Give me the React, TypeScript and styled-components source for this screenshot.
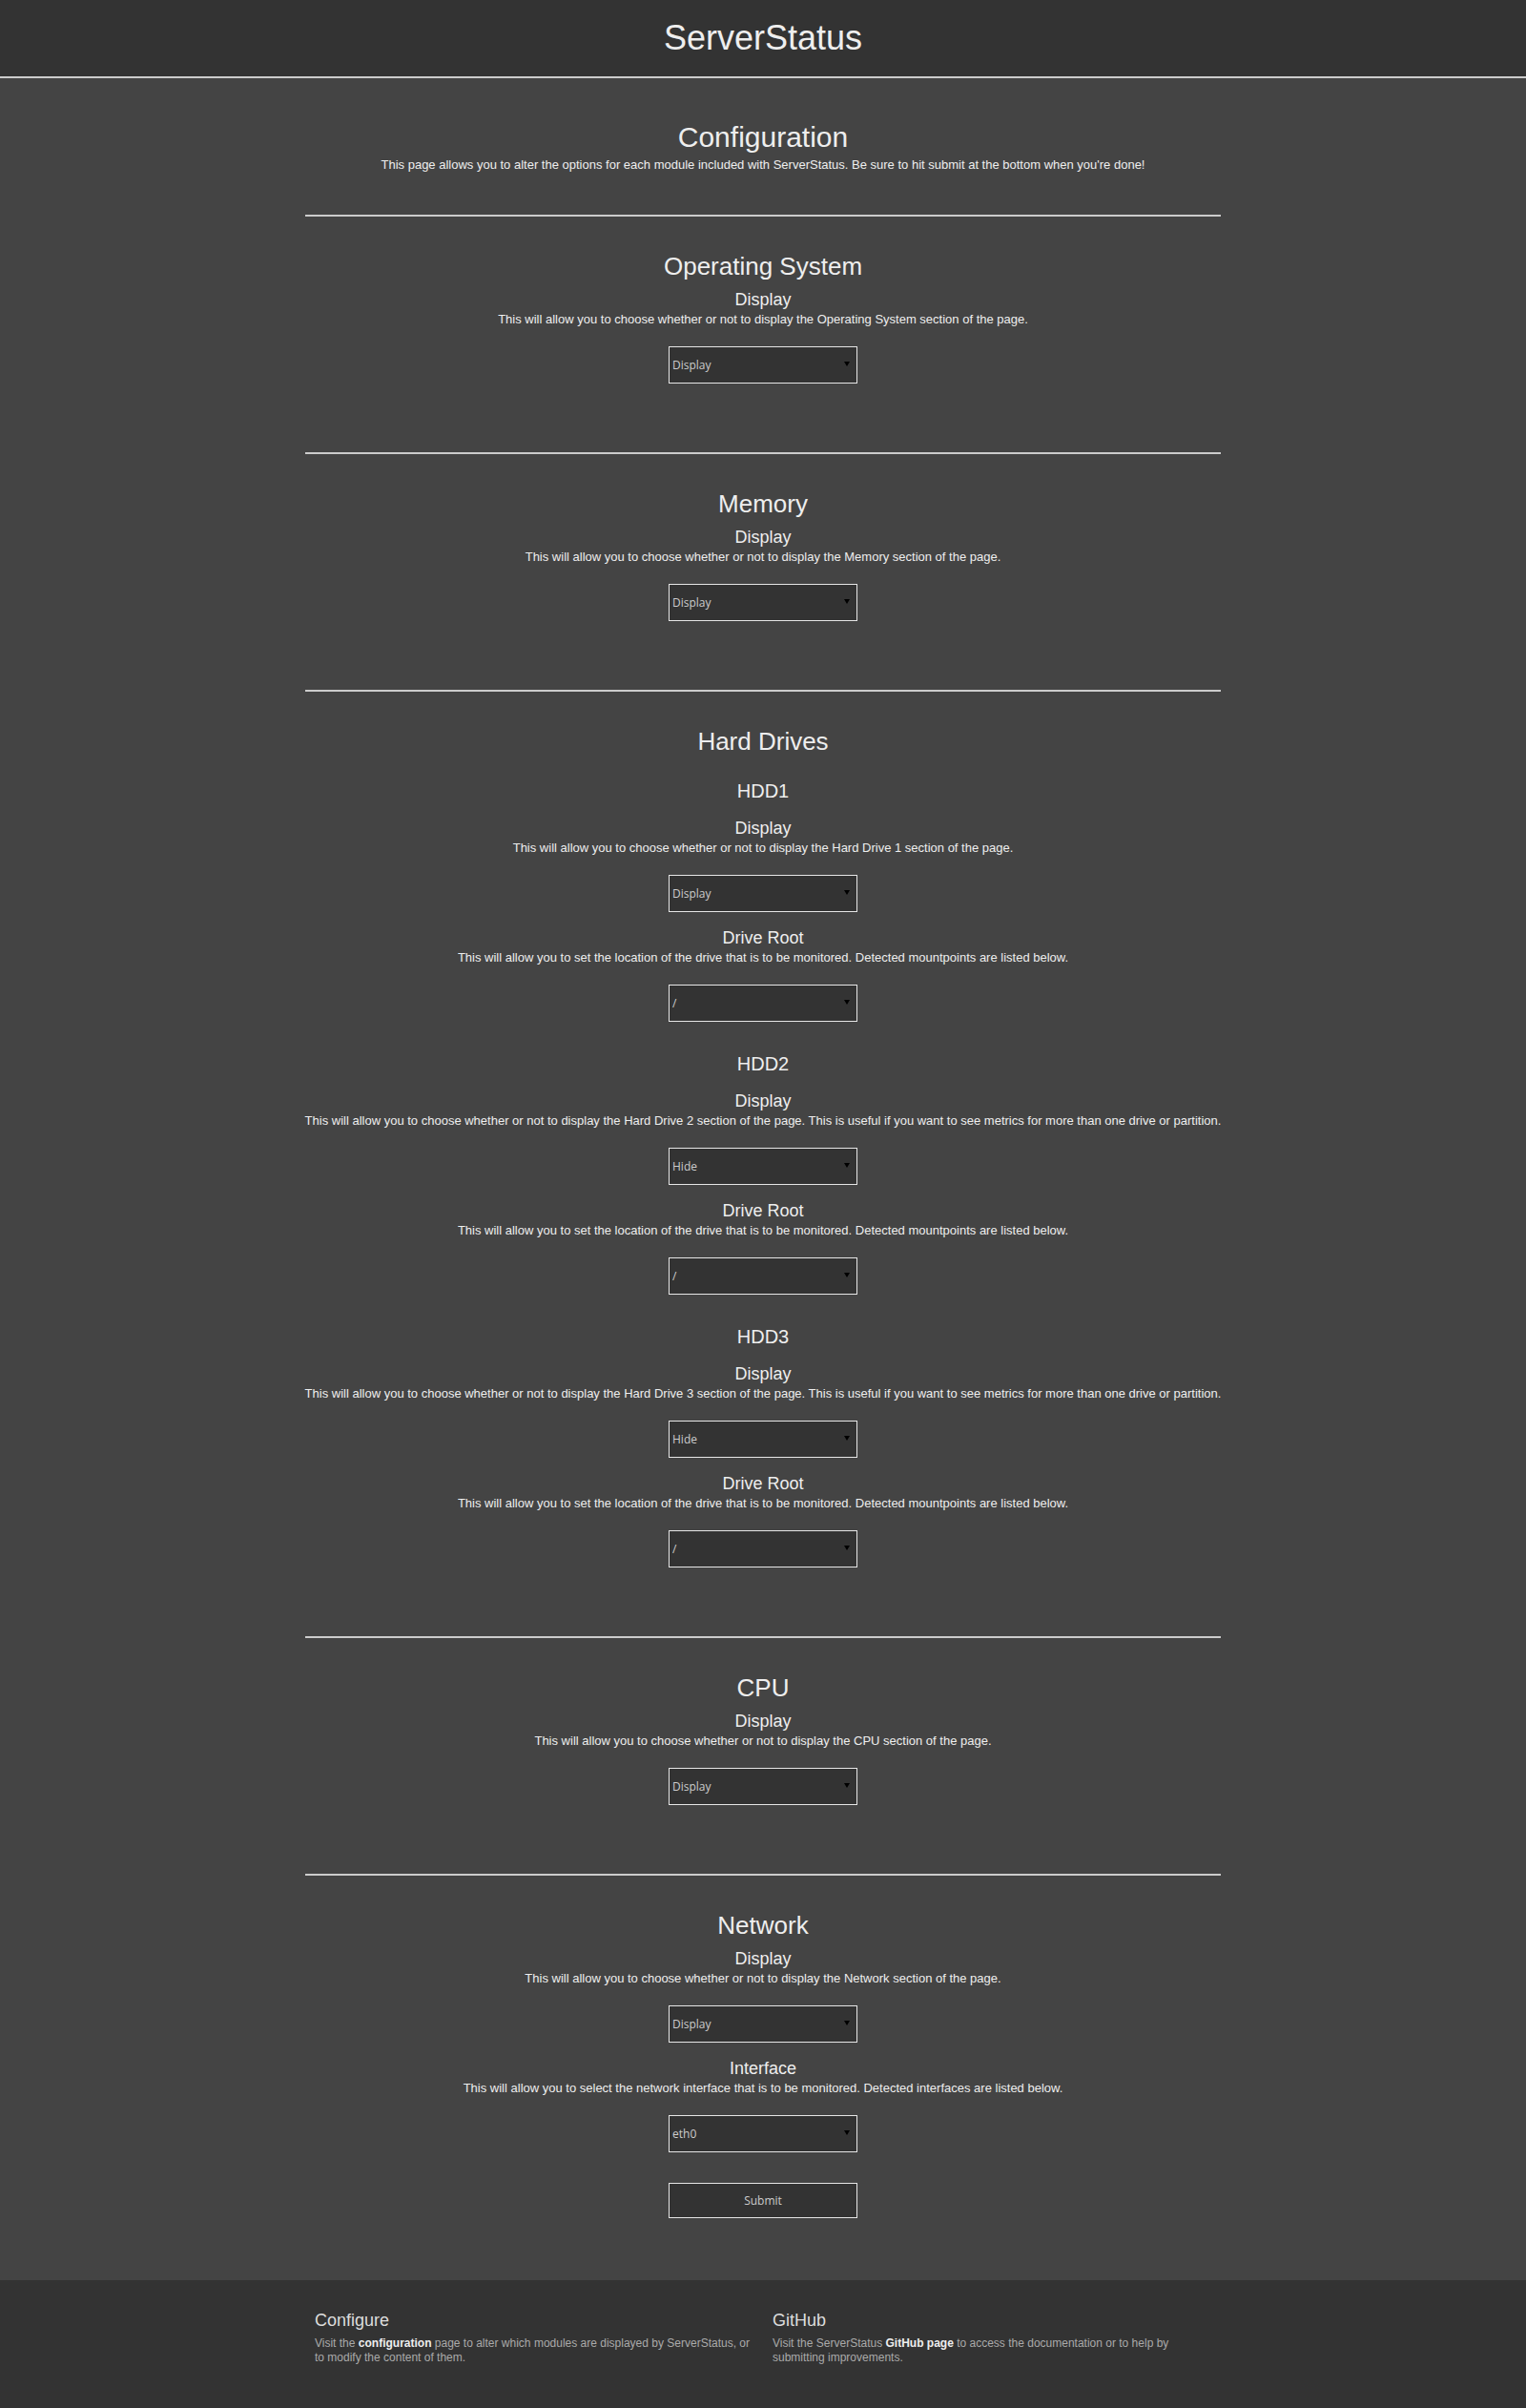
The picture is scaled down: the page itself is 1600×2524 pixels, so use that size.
import styled, { createGlobalStyle } from "styled-components";

interface FieldInfo {
  label: string;
  hint: string;
  options: string[];
  value: string;
}

interface DriveInfo {
  name: string;
  fields: FieldInfo[];
}

const displayField = (name: string, value = "Display", extra = ""): FieldInfo => ({
  label: "Display",
  hint: `This will allow you to choose whether or not to display the ${name} section of the page.${extra}`,
  options: ["Display", "Hide"],
  value,
});

const rootField: FieldInfo = {
  label: "Drive Root",
  hint: "This will allow you to set the location of the drive that is to be monitored. Detected mountpoints are listed below.",
  options: ["/"],
  value: "/",
};

const useful = " This is useful if you want to see metrics for more than one drive or partition.";

const drives: DriveInfo[] = [
  { name: "HDD1", fields: [displayField("Hard Drive 1"), rootField] },
  { name: "HDD2", fields: [displayField("Hard Drive 2", "Hide", useful), rootField] },
  { name: "HDD3", fields: [displayField("Hard Drive 3", "Hide", useful), rootField] },
];

const GlobalStyle = createGlobalStyle`
  html, body {
    margin: 0;
    padding: 0;
    background: #444444;
  }
  body {
    font-family: "Liberation Sans", Arial, Helvetica, sans-serif;
    color: #eeeeee;
  }
`;

function Field({ field }: { field: FieldInfo }) {
  return (
    <StyledField>
      <Label>{field.label}</Label>
      <Hint>{field.hint}</Hint>
      <SelectWrap>
        <Select defaultValue={field.value}>
          {field.options.map(o => (
            <option key={o}>{o}</option>
          ))}
        </Select>
      </SelectWrap>
    </StyledField>
  );
}

function App() {
  return (
    <>
      <GlobalStyle />
      <Header>ServerStatus</Header>
      <Main>
        <Intro>
          <PageTitle>Configuration</PageTitle>
          <Hint>
            This page allows you to alter the options for each module included with ServerStatus. Be sure to hit
            submit at the bottom when you're done!
          </Hint>
        </Intro>
        <Rule />
        <Section>
          <SectionTitle>Operating System</SectionTitle>
          <Field field={displayField("Operating System")} />
        </Section>
        <Rule />
        <Section>
          <SectionTitle>Memory</SectionTitle>
          <Field field={displayField("Memory")} />
        </Section>
        <Rule />
        <Section>
          <SectionTitle>Hard Drives</SectionTitle>
          <DriveList>
            {drives.map(d => (
              <Drive key={d.name}>
                <DriveTitle>{d.name}</DriveTitle>
                {d.fields.map(f => (
                  <Field key={f.label} field={f} />
                ))}
              </Drive>
            ))}
          </DriveList>
        </Section>
        <Rule />
        <Section>
          <SectionTitle>CPU</SectionTitle>
          <Field field={displayField("CPU")} />
        </Section>
        <Rule />
        <Section $last>
          <SectionTitle>Network</SectionTitle>
          <Field field={displayField("Network")} />
          <Field
            field={{
              label: "Interface",
              hint: "This will allow you to select the network interface that is to be monitored. Detected interfaces are listed below.",
              options: ["eth0"],
              value: "eth0",
            }}
          />
          <SubmitButton type="button">Submit</SubmitButton>
        </Section>
      </Main>
      <Footer>
        <FooterInner>
          <FooterCol>
            <FooterTitle>Configure</FooterTitle>
            <FooterText>
              Visit the <FooterLink>configuration</FooterLink> page to alter which modules are displayed by
              ServerStatus, or to modify the content of them.
            </FooterText>
          </FooterCol>
          <FooterCol>
            <FooterTitle>GitHub</FooterTitle>
            <FooterText>
              Visit the ServerStatus <FooterLink>GitHub page</FooterLink> to access the documentation or to help by
              submitting improvements.
            </FooterText>
          </FooterCol>
        </FooterInner>
      </Footer>
    </>
  );
}
export default App;

const Header = styled.header`
  height: 80px;
  line-height: 80px;
  background: #333333;
  border-bottom: 2px solid #cccccc;
  text-align: center;
  font-size: 36px;
  color: #eeeeee;
`;

const Main = styled.main`
  width: 960px;
  margin: 0 auto;
  padding-top: 44px;
  text-align: center;
`;

const Intro = styled.div`
  padding-bottom: 44px;
`;

const PageTitle = styled.h1`
  margin: 0 0 3px;
  font-size: 30px;
  line-height: 36px;
  font-weight: normal;
`;

const Rule = styled.div`
  height: 2px;
  background: #cccccc;
`;

const Section = styled.section<{ $last?: boolean }>`
  padding-top: 37px;
  padding-bottom: ${p => (p.$last ? "65px" : "72px")};
`;

const SectionTitle = styled.h2`
  margin: 0 0 8px;
  font-size: 26px;
  line-height: 31px;
  font-weight: normal;
`;

const DriveList = styled.div`
  padding-top: 16px;
  display: flex;
  flex-direction: column;
  gap: 32px;
`;

const Drive = styled.div``;

const DriveTitle = styled.h3`
  margin: 0 0 16px;
  font-size: 20px;
  line-height: 24px;
  font-weight: normal;
`;

const StyledField = styled.div`
  & + & {
    margin-top: 16px;
  }
`;

const Label = styled.h4`
  margin: 0;
  font-size: 18px;
  line-height: 22px;
  font-weight: normal;
`;

const Hint = styled.p`
  margin: 2px -30px 0;
  font-size: 13px;
  line-height: 16px;
  white-space: nowrap;
  color: #eeeeee;
`;

const SelectWrap = styled.span`
  position: relative;
  display: inline-block;
  margin-top: 20px;
  vertical-align: top;

  &::after {
    content: "";
    position: absolute;
    right: 8px;
    top: 16px;
    border-left: 3px solid transparent;
    border-right: 3px solid transparent;
    border-top: 5px solid #000000;
    pointer-events: none;
  }
`;

const Select = styled.select`
  appearance: none;
  -webkit-appearance: none;
  display: block;
  box-sizing: border-box;
  width: 198px;
  height: 39px;
  margin: 0;
  padding: 0 3px;
  border: 1px solid #e6e6e6;
  border-radius: 0;
  background: #333333;
  color: #cccccc;
  font-family: "Open Sans", "Noto Sans", sans-serif;
  font-size: 12px;
  outline: none;
`;

const SubmitButton = styled.button`
  display: block;
  box-sizing: border-box;
  width: 198px;
  height: 37px;
  margin: 32px auto 0;
  border: 1px solid #e6e6e6;
  border-radius: 0;
  background: #333333;
  color: #cccccc;
  font-family: "Open Sans", "Noto Sans", sans-serif;
  font-size: 12px;
`;

const Footer = styled.footer`
  background: #333333;
  padding: 31px 0 45px;
`;

const FooterInner = styled.div`
  width: 960px;
  margin: 0 auto;
  display: grid;
  grid-template-columns: 1fr 1fr;
`;

const FooterCol = styled.div`
  padding: 0 10px;
`;

const FooterTitle = styled.h4`
  margin: 0 0 6px;
  font-size: 18px;
  line-height: 22px;
  font-weight: normal;
  color: #dddddd;
`;

const FooterText = styled.p`
  margin: 0;
  font-size: 12px;
  line-height: 15px;
  color: #aaaaaa;
`;

const FooterLink = styled.a`
  color: #eeeeee;
  font-weight: bold;
  text-decoration: none;
`;
